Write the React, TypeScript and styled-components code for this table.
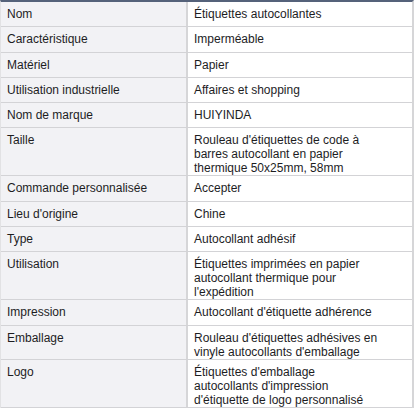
import React from 'react'
import styled, { createGlobalStyle } from 'styled-components'

const GlobalStyle = createGlobalStyle`
  html, body {
    margin: 0;
    padding: 0;
    background: #ffffff;
  }
  body {
    font-family: 'Liberation Sans', Arial, sans-serif;
    font-size: 12px;
    color: #1d1d1f;
  }
`

const Table = styled.div`
  width: 414px;
  border-top: 2px solid #55627a;
  border-left: 1px solid #e2e2e4;
  border-right: 2px solid #d6d6d8;
  box-sizing: border-box;
`

const Row = styled.div`
  display: grid;
  grid-template-columns: 187px 1fr;
  min-height: 25.3px;
  border-bottom: 1px solid #d3d3d6;
  box-sizing: border-box;
`

const Cell = styled.div<{ $label?: boolean }>`
  padding: 5px 6px 0;
  line-height: 14px;
  background: ${(p) => (p.$label ? '#f2f2f5' : '#ffffff')};
  border-right: ${(p) => (p.$label ? '2px solid #d6d6d8' : 'none')};
`

const Value = styled.div`
  max-width: 186px;
`

const specs: [string, string][] = [
  ['Nom', 'Étiquettes autocollantes'],
  ['Caractéristique', 'Imperméable'],
  ['Matériel', 'Papier'],
  ['Utilisation industrielle', 'Affaires et shopping'],
  ['Nom de marque', 'HUIYINDA'],
  ['Taille', "Rouleau d'étiquettes de code à barres autocollant en papier thermique 50x25mm, 58mm"],
  ['Commande personnalisée', 'Accepter'],
  ["Lieu d'origine", 'Chine'],
  ['Type', 'Autocollant adhésif'],
  ['Utilisation', "Étiquettes imprimées en papier autocollant thermique pour l'expédition"],
  ['Impression', "Autocollant d'étiquette adhérence"],
  ['Emballage', "Rouleau d'étiquettes adhésives en vinyle autocollants d'emballage"],
  ['Logo', "Étiquettes d'emballage autocollants d'impression d'étiquette de logo personnalisé"],
]

const App = () => (
  <>
    <GlobalStyle />
    <Table>
      {specs.map(([label, value]) => (
        <Row key={label}>
          <Cell $label>{label}</Cell>
          <Cell>
            <Value>{value}</Value>
          </Cell>
        </Row>
      ))}
    </Table>
  </>
)

export default App
